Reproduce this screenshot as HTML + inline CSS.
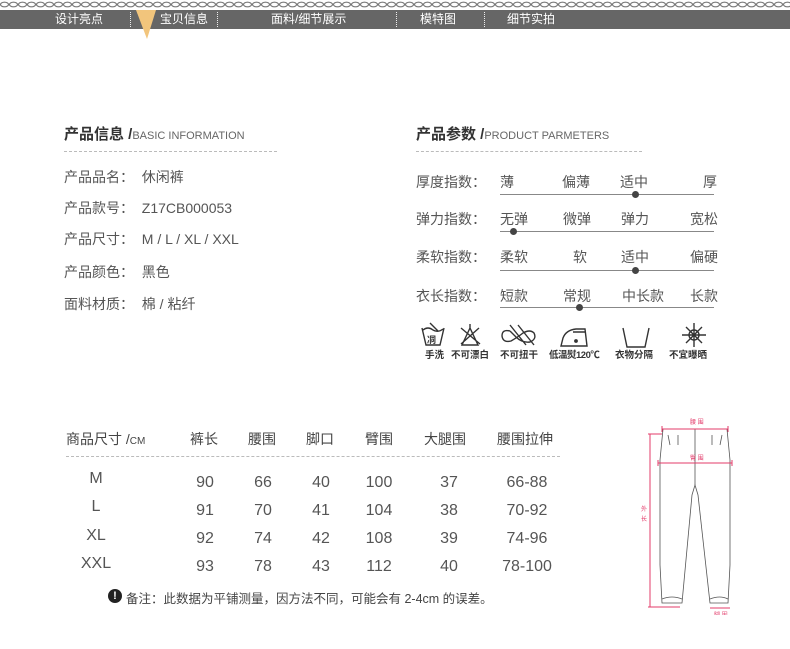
<!DOCTYPE html>
<html><head><meta charset="utf-8"><style>
*{margin:0;padding:0;box-sizing:border-box}
body{width:790px;height:649px;background:#fff;position:relative;overflow:hidden;font-family:"Liberation Sans","Noto Sans CJK SC",sans-serif;color:#555}
.a{position:absolute;white-space:nowrap}
.nav{position:absolute;left:0;top:10px;width:790px;height:19px;background:#666}
.nt{position:absolute;top:12px;color:#fff;font-size:12px;line-height:15px}
.sep{position:absolute;top:12px;height:15px;border-left:1px dotted #eee}
.h{font-size:15px;font-weight:bold;color:#333}
.h span{font-size:11px;font-weight:normal;color:#666}
.dash{position:absolute;height:0;border-top:1px dashed #bbb}
.r{font-size:14px;color:#555}
.ln{position:absolute;height:1px;background:#888}
.dot{position:absolute;width:7px;height:7px;border-radius:50%;background:#444}
.t{font-size:14px;color:#444}
.n{font-size:16px;color:#555;text-align:center;width:70px}
.ic{position:absolute;top:347px;font-size:9.5px;font-weight:bold;color:#333}
</style></head><body>
<svg class="a" style="left:0;top:0" width="790" height="10"><defs><pattern id="c" width="9" height="10" patternUnits="userSpaceOnUse"><ellipse cx="4.5" cy="4.5" rx="4" ry="2.3" fill="none" stroke="#777" stroke-width="1.2"/></pattern></defs><rect width="790" height="10" fill="url(#c)"/></svg>
<div class="nav"></div>
<div class="nt" style="left:55px">设计亮点</div>
<div class="sep" style="left:130px"></div>
<svg class="a" style="left:136px;top:10px" width="22" height="30"><polygon points="0,0 20,0 11,29" fill="#f2c57c"/></svg>
<div class="nt" style="left:160px">宝贝信息</div>
<div class="sep" style="left:217px"></div>
<div class="nt" style="left:271px">面料/细节展示</div>
<div class="sep" style="left:396px"></div>
<div class="nt" style="left:420px">模特图</div>
<div class="sep" style="left:484px"></div>
<div class="nt" style="left:507px">细节实拍</div>

<div class="a h" style="left:64px;top:123px">产品信息 /<span>BASIC INFORMATION</span></div>
<div class="dash" style="left:64px;top:151px;width:213px"></div>
<div class="a r" style="left:64px;top:167px">产品品名：&nbsp; 休闲裤</div>
<div class="a r" style="left:64px;top:198px">产品款号：&nbsp; Z17CB000053</div>
<div class="a r" style="left:64px;top:229px">产品尺寸：&nbsp; M / L / XL / XXL</div>
<div class="a r" style="left:64px;top:262px">产品颜色：&nbsp; 黑色</div>
<div class="a r" style="left:64px;top:294px">面料材质：&nbsp; 棉 / 粘纤</div>

<div class="a h" style="left:416px;top:123px">产品参数 /<span>PRODUCT PARMETERS</span></div>
<div class="dash" style="left:416px;top:151px;width:226px"></div>

<div class="a r" style="left:416px;top:172px">厚度指数：</div>
<div class="a r" style="left:500px;top:172px">薄</div><div class="a r" style="left:562px;top:172px">偏薄</div><div class="a r" style="left:620px;top:172px">适中</div><div class="a r" style="left:703px;top:172px">厚</div>
<div class="ln" style="left:500px;top:194px;width:214px"></div><div class="dot" style="left:632px;top:191px"></div>

<div class="a r" style="left:416px;top:209px">弹力指数：</div>
<div class="a r" style="left:500px;top:209px">无弹</div><div class="a r" style="left:563px;top:209px">微弹</div><div class="a r" style="left:621px;top:209px">弹力</div><div class="a r" style="left:690px;top:209px">宽松</div>
<div class="ln" style="left:500px;top:231px;width:214px"></div><div class="dot" style="left:510px;top:228px"></div>

<div class="a r" style="left:416px;top:247px">柔软指数：</div>
<div class="a r" style="left:500px;top:247px">柔软</div><div class="a r" style="left:573px;top:247px">软</div><div class="a r" style="left:621px;top:247px">适中</div><div class="a r" style="left:690px;top:247px">偏硬</div>
<div class="ln" style="left:500px;top:270px;width:214px"></div><div class="dot" style="left:632px;top:267px"></div>

<div class="a r" style="left:416px;top:286px">衣长指数：</div>
<div class="a r" style="left:500px;top:286px">短款</div><div class="a r" style="left:563px;top:286px">常规</div><div class="a r" style="left:622px;top:286px">中长款</div><div class="a r" style="left:690px;top:286px">长款</div>
<div class="ln" style="left:500px;top:307px;width:214px"></div><div class="dot" style="left:576px;top:304px"></div>

<svg class="a" style="left:410px;top:318px" width="320" height="30" fill="none" stroke="#333" stroke-width="1.4">
<path d="M12 10 L16 27 L30 27 L34 10 M13 12 Q18 8 23 12 Q28 15 33 11 M20 5 L28 13"/><text x="17" y="25" font-size="9" font-weight="bold" fill="#333" stroke="none">㓊</text>
<path d="M52 27 L60 10 L68 27 Z M51 10 L70 26 M69 10 L51 26 M60 6 L60 10"/>
<path d="M100 13 Q92 11 92 18 Q93 25 101 23 Q108 19 113 15 Q120 11 124 15 Q127 21 120 24 Q112 25 106 19 Q100 13 100 13 M100 7 L116 27 M108 7 L124 27"/>
<path d="M151 28 L153 20 Q156 12 166 11 L175 11 L177 28 Z M163 14 L175 14"/><circle cx="166" cy="23" r="1.2" fill="#333"/>
<path d="M213 10 L217 29 L235 29 L239 10"/>
<path d="M276 9 L292 25 M292 9 L276 25 M284 5 L284 29 M272 17 L296 17"/><circle cx="284" cy="17" r="5"/>
</svg>
<div class="ic" style="left:425px">手洗</div>
<div class="ic" style="left:451px">不可漂白</div>
<div class="ic" style="left:500px">不可扭干</div>
<div class="ic" style="left:549px;letter-spacing:-0.5px">低温熨120℃</div>
<div class="ic" style="left:615px">衣物分隔</div>
<div class="ic" style="left:669px">不宜曝晒</div>

<div class="a t" style="left:66px;top:429px;font-size:14px">商品尺寸 /<span style="font-size:10px">CM</span></div>
<div class="a t" style="left:190px;top:429px">裤长</div>
<div class="a t" style="left:248px;top:429px">腰围</div>
<div class="a t" style="left:306px;top:429px">脚口</div>
<div class="a t" style="left:365px;top:429px">臂围</div>
<div class="a t" style="left:424px;top:429px">大腿围</div>
<div class="a t" style="left:497px;top:429px">腰围拉伸</div>
<div class="dash" style="left:66px;top:456px;width:494px"></div>

<div class="a n" style="left:61px;top:470px">M</div>
<div class="a n" style="left:61px;top:498px">L</div>
<div class="a n" style="left:61px;top:527px">XL</div>
<div class="a n" style="left:61px;top:555px">XXL</div>
<div class="a n" style="left:170px;top:474px">90</div><div class="a n" style="left:228px;top:474px">66</div><div class="a n" style="left:286px;top:474px">40</div><div class="a n" style="left:344px;top:474px">100</div><div class="a n" style="left:414px;top:474px">37</div><div class="a n" style="left:492px;top:474px">66-88</div>
<div class="a n" style="left:170px;top:502px">91</div><div class="a n" style="left:228px;top:502px">70</div><div class="a n" style="left:286px;top:502px">41</div><div class="a n" style="left:344px;top:502px">104</div><div class="a n" style="left:414px;top:502px">38</div><div class="a n" style="left:492px;top:502px">70-92</div>
<div class="a n" style="left:170px;top:530px">92</div><div class="a n" style="left:228px;top:530px">74</div><div class="a n" style="left:286px;top:530px">42</div><div class="a n" style="left:344px;top:530px">108</div><div class="a n" style="left:414px;top:530px">39</div><div class="a n" style="left:492px;top:530px">74-96</div>
<div class="a n" style="left:170px;top:558px">93</div><div class="a n" style="left:228px;top:558px">78</div><div class="a n" style="left:286px;top:558px">43</div><div class="a n" style="left:344px;top:558px">112</div><div class="a n" style="left:414px;top:558px">40</div><div class="a n" style="left:492px;top:558px">78-100</div>

<div class="a" style="left:108px;top:589px;width:14px;height:14px;border-radius:50%;background:#222;color:#fff;font-size:11px;font-weight:bold;text-align:center;line-height:14px">!</div>
<div class="a" style="left:126px;top:588px;font-size:12.5px;color:#444">备注：此数据为平铺测量，因方法不同，可能会有 2-4cm 的误差。</div>

<svg class="a" style="left:640px;top:415px" width="100" height="200" fill="none">
<g stroke="#555" stroke-width="0.8">
<path d="M23 14 L87 14 L90 45 L90 150 L88 188 L70 188 L58 80 L55 70 L52 80 L42 188 L22 188 L20 150 L20 45 Z"/>
<path d="M55 14 L55 70"/><path d="M28 20 L30 30 M38 20 L38 30 M72 20 L72 30 M82 20 L80 30"/>
<path d="M22 184 Q32 180 42 184 M70 184 Q80 180 88 184"/>
</g>
<g stroke="#e33b6a" stroke-width="1">
<path d="M22 14 L88 14 M22 11 L22 17 M88 11 L88 17"/>
<path d="M18 48 L92 48 M18 45 L18 51 M92 45 L92 51"/>
<path d="M10 19 L10 192 M8 19 L22 19 M8 192 L40 192"/>
<path d="M70 193 L90 193"/>
</g>
<g fill="#e33b6a" font-size="6"><text x="50" y="9">腰 围</text><text x="50" y="45">臀 围</text><text x="1" y="96">外</text><text x="1" y="106">长</text><text x="74" y="202">脚 围</text></g>
</svg>
</body></html>
